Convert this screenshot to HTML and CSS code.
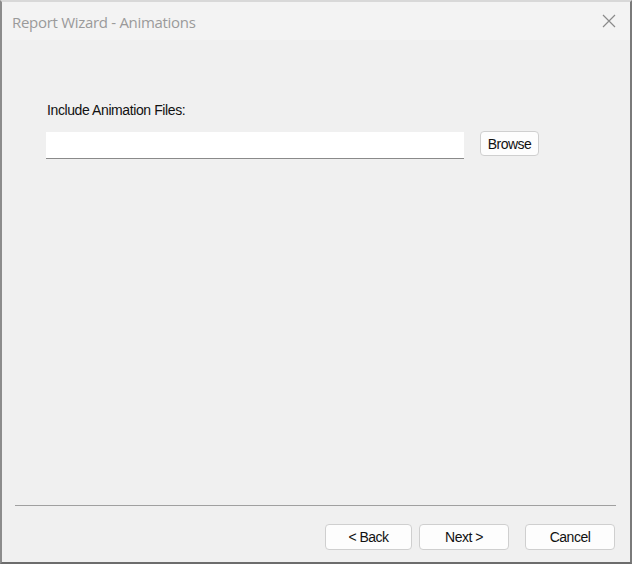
FILE: index.html
```html
<!DOCTYPE html>
<html>
<head>
<meta charset="utf-8">
<link rel="stylesheet" href="styles.css">
</head>
<body>
<div class="window">
  <div class="titlebar">
    <span class="title">Report Wizard - Animations</span>
    <svg class="close" width="14" height="14" viewBox="0 0 14 14"><path d="M1 1L13 13M13 1L1 13" stroke="#8a8a8a" stroke-width="1.2" fill="none"/></svg>
  </div>
  <div class="content">
    <div class="main">
      <div class="label">Include Animation Files:</div>
      <div class="row">
        <div class="input"></div>
        <button class="btn browse">Browse</button>
      </div>
    </div>
    <div class="sep"></div>
    <div class="footer">
      <button class="btn nav">&lt; Back</button>
      <button class="btn nav next">Next &gt;</button>
      <button class="btn nav cancel">Cancel</button>
    </div>
  </div>
</div>
</body>
</html>
```

FILE: styles.css
```css
html, body {
  margin: 0;
  padding: 0;
  background: #f0f0f0;
}
.window {
  width: 632px;
  height: 564px;
  box-sizing: border-box;
  border-left: 2px solid #8c8c8c;
  border-right: 2px solid #7a7a7a;
  border-bottom: 2px solid #6c6c6c;
  border-top: 2px solid #d8d8d8;
  display: flex;
  flex-direction: column;
  background: #f0f0f0;
  font-family: "Liberation Sans", Arial, sans-serif;
}
.titlebar {
  height: 38px;
  flex: none;
  background: #f3f3f3;
  display: flex;
  align-items: center;
  justify-content: space-between;
  padding: 0 14px 0 10px;
}
.title {
  font-family: "Open Sans", sans-serif;
  font-size: 15px;
  color: #9a9a9a;
  letter-spacing: -0.3px;
  margin-top: 1px;
}
.close {
  display: block;
}
.content {
  flex: 1;
  display: flex;
  flex-direction: column;
}
.main {
  flex: 1;
  padding: 62px 0 0 44px;
}
.label {
  font-size: 14px;
  color: #111;
  letter-spacing: -0.4px;
  height: 16px;
  line-height: 16px;
  padding-left: 1px;
}
.row {
  display: flex;
  align-items: flex-start;
  margin-top: 14px;
}
.input {
  width: 418px;
  height: 26px;
  background: #fff;
  border-bottom: 1px solid #8a8a8a;
}
.btn {
  font-family: "Liberation Sans", Arial, sans-serif;
  font-size: 14px;
  letter-spacing: -0.5px;
  color: #111;
  background: #fdfdfd;
  border: 1px solid #cfcfcf;
  border-radius: 4px;
  box-sizing: border-box;
  padding: 0;
  margin: 0;
}
.browse {
  width: 59px;
  height: 25px;
  margin-left: 16px;
  margin-top: -1px;
}
.sep {
  height: 1px;
  background: #a0a0a0;
  margin: 0 14px 0 13px;
  flex: none;
}
.footer {
  height: 56px;
  flex: none;
  display: flex;
  align-items: flex-start;
  padding: 18px 15px 0 0;
  justify-content: flex-end;
  box-sizing: border-box;
}
.nav {
  width: 87px;
  height: 26px;
}
.next {
  width: 90px;
  margin-left: 7px;
}
.cancel {
  width: 90px;
  margin-left: 16px;
}
```
